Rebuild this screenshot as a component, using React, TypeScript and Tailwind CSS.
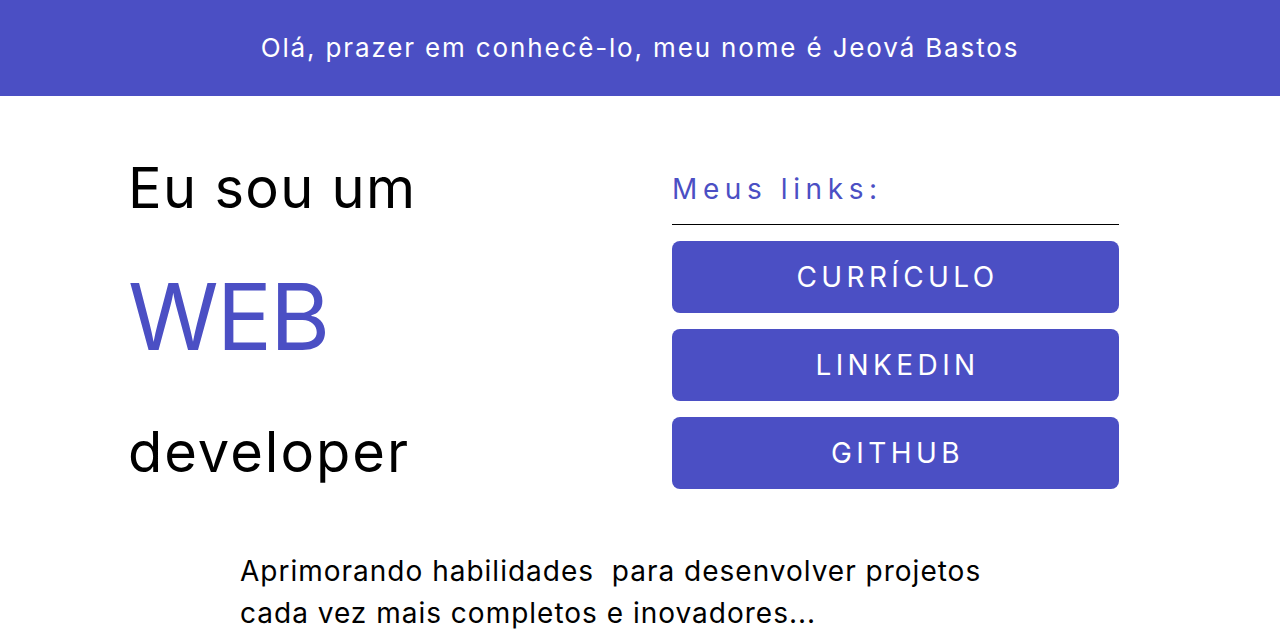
const ACCENT = "#4b4fc4";

const links = ["CURRÍCULO", "LINKEDIN", "GITHUB"];

function App() {
  return (
    <div className="min-h-screen bg-white text-black font-['Inter',sans-serif]">
      {/* header */}
      <header className="h-24 flex items-center justify-center bg-[#4b4fc4]">
        <h2 className="text-[26px] leading-none tracking-[1.85px] text-white">
          Olá, prazer em conhecê-lo, meu nome é Jeová Bastos
        </h2>
      </header>

      <main className="pt-16 pl-32 flex">
        <div className="w-[544px] flex flex-col">
          <span className="text-[56px] leading-none tracking-[1.3px]">Eu sou um</span>
          <span className="mt-[55px] text-[92px] leading-none tracking-[-2px] text-[#4b4fc4]">WEB</span>
          <span className="mt-[61px] text-[56px] leading-none tracking-[2px]">developer</span>
        </div>

        <div className="w-[447px] flex flex-col pt-[15px]">
          <div className="pb-[19px] border-b border-black">
            <span className="text-[28px] leading-none tracking-[5.6px]" style={{ color: ACCENT }}>
              Meus links:
            </span>
          </div>
          <div className="mt-4 flex flex-col gap-4">
            {links.map((l) => (
              <a
                key={l}
                href="#"
                className="h-[72px] rounded-lg bg-[#4b4fc4] flex items-center justify-center pl-[4px] text-white text-[28px] leading-none tracking-[4.4px]"
              >
                {l}
              </a>
            ))}
          </div>
        </div>
      </main>

      <section className="mt-[61px] w-[800px] mx-auto">
        <p className="text-[28px] leading-[42px] tracking-[1px]">
          Aprimorando habilidades&nbsp; para desenvolver projetos
          <br />
          cada vez mais completos e inovadores...
        </p>
      </section>
    </div>
  );
}

export default App;
